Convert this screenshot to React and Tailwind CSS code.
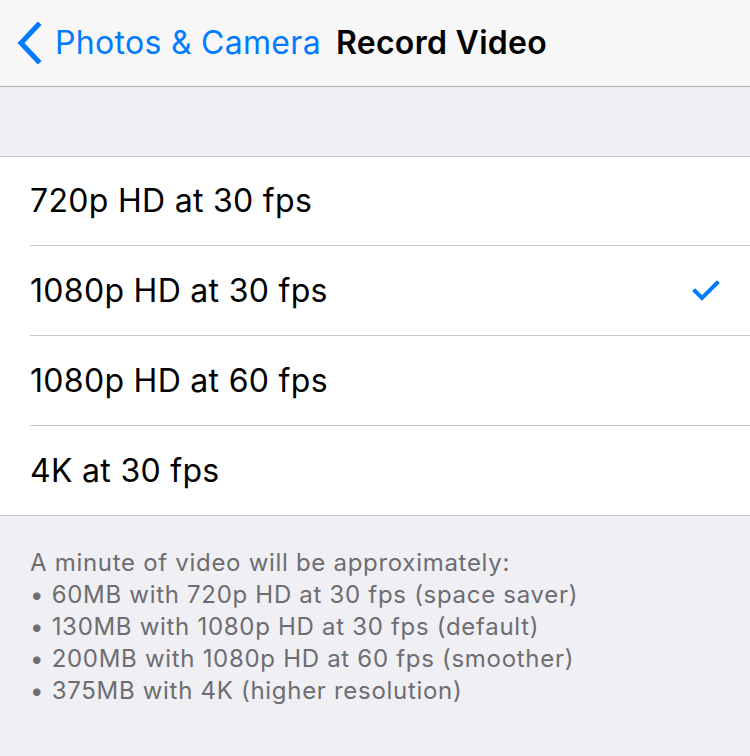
const options = [
  "720p HD at 30 fps",
  "1080p HD at 30 fps",
  "1080p HD at 60 fps",
  "4K at 30 fps",
];

const notes = [
  "A minute of video will be approximately:",
  "• 60MB with 720p HD at 30 fps (space saver)",
  "• 130MB with 1080p HD at 30 fps (default)",
  "• 200MB with 1080p HD at 60 fps (smoother)",
  "• 375MB with 4K (higher resolution)",
];

const App = () => {
  const selected = 1;

  return (
    <div
      className="w-[750px] h-[756px] bg-[#efeff4] overflow-hidden"
      style={{ fontFamily: "Inter, 'Noto Sans', sans-serif" }}
    >
      {/* nav bar */}
      <div className="h-[87px] bg-[#f7f7f8] border-b border-[#b2b2b2] flex items-center">
        <svg width="26" height="42" viewBox="0 0 26 42" className="ml-[16px] mr-[13px]">
          <path
            d="M22 3 L5 21 L22 39"
            fill="none"
            stroke="#007aff"
            strokeWidth="5"
            strokeLinecap="square"
          />
        </svg>
        <span className="text-[32px] text-[#007aff] tracking-[0.3px]">
          Photos &amp; Camera
        </span>
        <span className="ml-[15px] text-[32px] font-semibold text-black tracking-[0.3px]">
          Record Video
        </span>
      </div>

      <div className="h-[69px]" />

      {/* options */}
      <div className="bg-white border-y border-[#c8c7cc]">
        {options.map((item, i) => (
          <div key={item} className="pl-[30px]">
            <div
              className={`flex items-center pr-[30px] ${
                i === 0
                  ? "border-b border-[#c8c7cc] h-[89px]"
                  : i < options.length - 1
                  ? "border-b border-[#c8c7cc] h-[90px]"
                  : "h-[89px]"
              }`}
            >
              <span className="text-[32px] text-black flex-1 tracking-[0.3px]">{item}</span>
              {i === selected && (
                <svg width="28" height="22" viewBox="0 0 28 22">
                  <path
                    d="M3 11 L10 18 L25 3"
                    fill="none"
                    stroke="#007aff"
                    strokeWidth="4"
                    strokeLinecap="square"
                  />
                </svg>
              )}
            </div>
          </div>
        ))}
      </div>

      {/* footer */}
      <div className="pl-[30px] pt-[31px] text-[24px] leading-[32px] text-[#6d6d72] tracking-[0.7px]">
        {notes.map((line) => (
          <div key={line}>{line}</div>
        ))}
      </div>
    </div>
  );
};

export default App;
